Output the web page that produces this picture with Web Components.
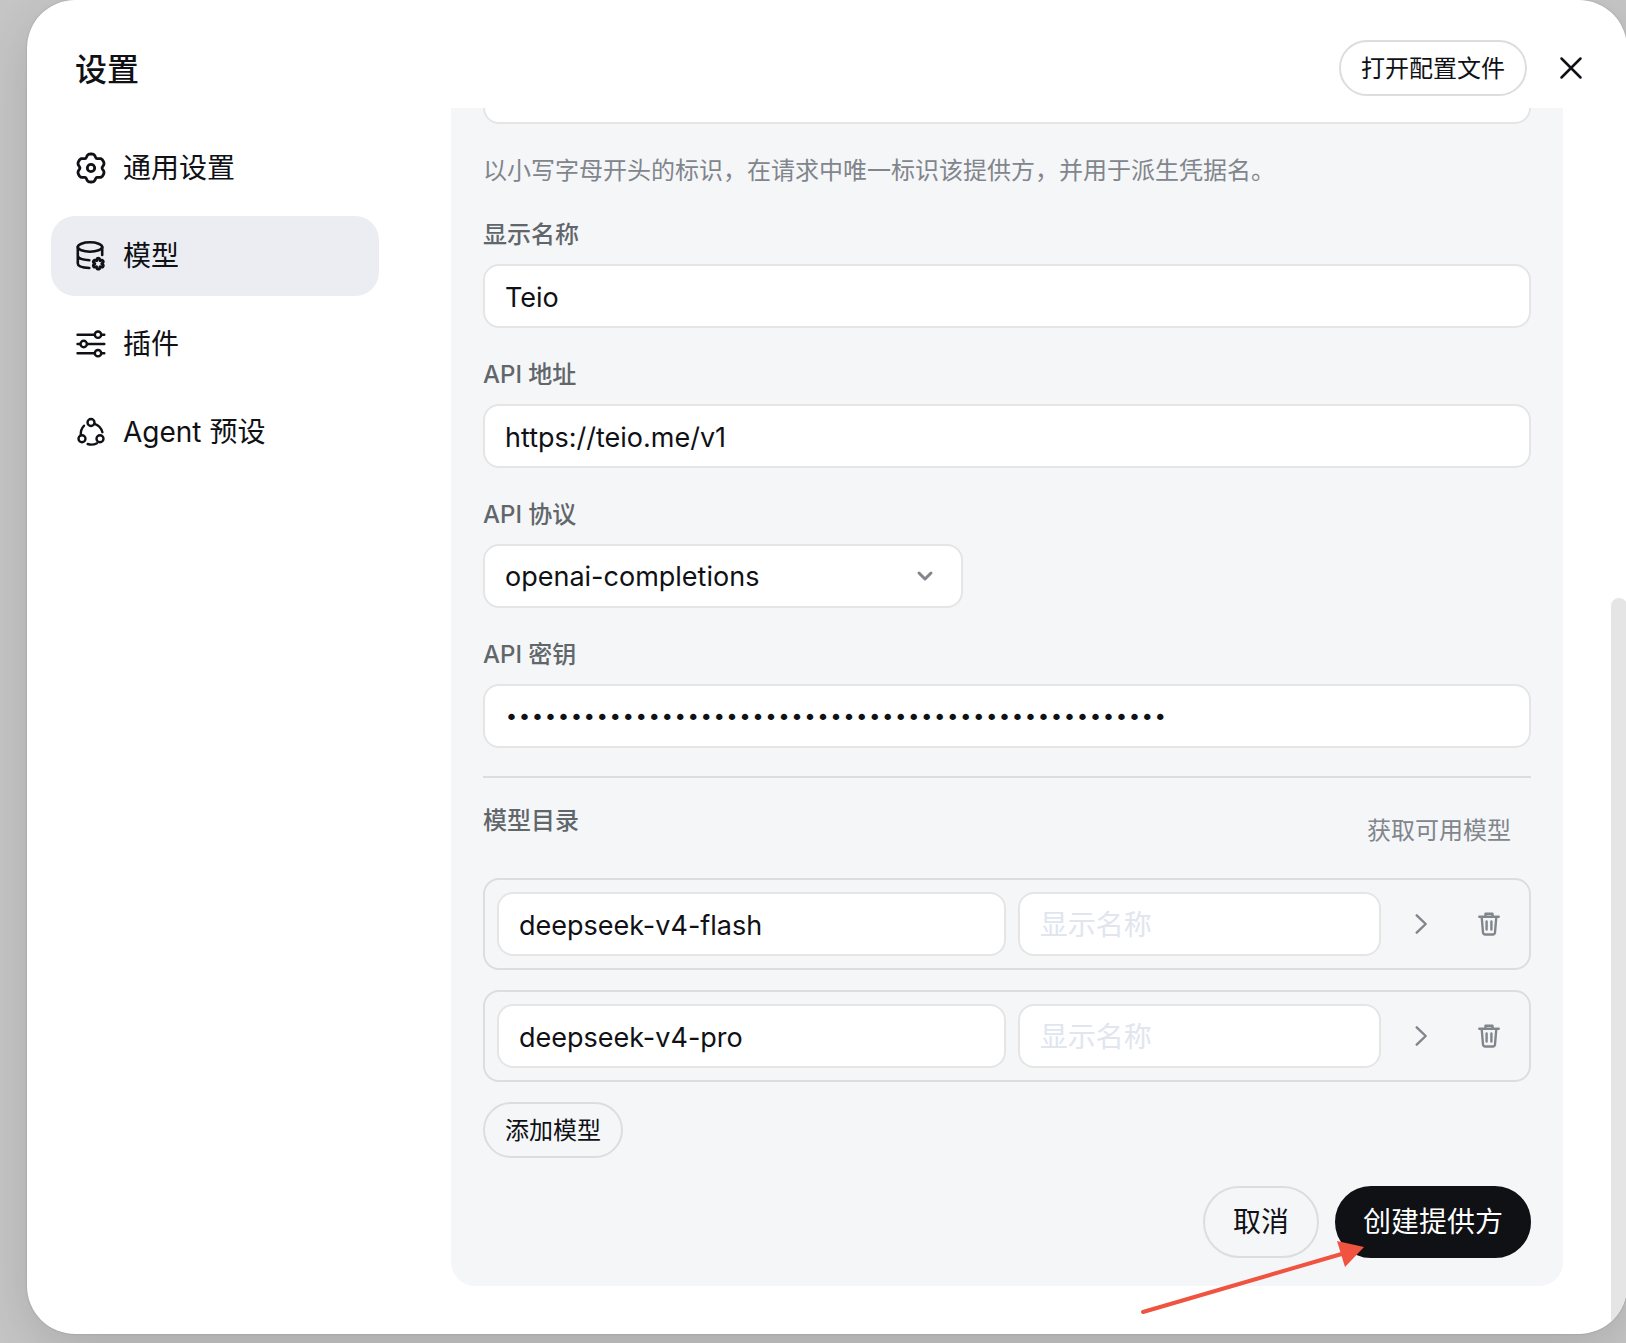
<!DOCTYPE html>
<html lang="zh-CN">
<head>
<meta charset="utf-8">
<title>设置</title>
<style>
  html, body {
    height: 100%;
    margin: 0;
  }

  body {
    overflow: hidden;
    background: #c6c6c6;
    color: #0f1115;
    font-family: Inter, "Noto Sans CJK SC", sans-serif;
    font-size: 28px;
    line-height: 40px;
  }
</style>
</head>
<body>

<settings-dialog heading="设置">
  <pill-button slot="action" size="small">打开配置文件</pill-button>

  <nav-item slot="nav" icon="gear">通用设置</nav-item>
  <nav-item slot="nav" icon="database" active>模型</nav-item>
  <nav-item slot="nav" icon="sliders">插件</nav-item>
  <nav-item slot="nav" icon="agents">Agent 预设</nav-item>

  <provider-form></provider-form>
</settings-dialog>

<template id="nav-item">
  <style>
    :host {
      display: block;
    }

    a {
      display: flex;
      align-items: center;
      gap: 16px;
      height: 80px;
      padding: 0 24px;
      border-radius: 24px;
      color: inherit;
      text-decoration: none;
    }

    :host([active]) a {
      background: #ecedf2;
    }
  </style>
  <a href="#"><ui-icon></ui-icon><span><slot></slot></span></a>
</template>

<template id="pill-button">
  <style>
    :host {
      display: block;
    }

    button {
      box-sizing: border-box;
      display: block;
      height: 72px;
      padding: 0 28px;
      border: 2px solid #dcdddf;
      border-radius: 36px;
      background: transparent;
      color: inherit;
      font: inherit;
      white-space: nowrap;
      cursor: pointer;
    }

    :host([size=small]) button {
      height: 56px;
      padding: 2px 20px 0;
      border-radius: 28px;
      font-size: 24px;
    }

    :host([kind=primary]) button {
      padding: 0 26px;
      border-color: #0f1115;
      background: #0f1115;
      color: #fff;
    }

    :host([kind=text]) button {
      border: none;
      color: #81858c;
    }
  </style>
  <button type="button"><slot></slot></button>
</template>

<template id="icon-button">
  <style>
    :host {
      display: block;
    }

    button {
      display: flex;
      align-items: center;
      justify-content: center;
      width: 56px;
      height: 56px;
      padding: 0;
      border: none;
      background: none;
      color: inherit;
      cursor: pointer;
    }
  </style>
  <button type="button"><ui-icon></ui-icon></button>
</template>

<template id="text-field">
  <style>
    :host {
      display: flex;
      flex-direction: column;
      gap: 12px;
      min-width: 0;
    }

    label {
      padding-top: 2px;
      color: #61666b;
      font-size: 24px;
      font-weight: 500;
      line-height: 34px;
    }

    .control {
      display: grid;
      align-items: center;
    }

    .control > * {
      grid-area: 1 / 1;
    }

    input, select {
      appearance: none;
      box-sizing: border-box;
      width: 100%;
      height: 64px;
      margin: 0;
      padding: 2px 20px 0;
      border: 2px solid #e5e5e5;
      border-radius: 16px;
      outline: none;
      background: #fff;
      color: #0f1115;
      font: inherit;
      font-size: 27px;
      line-height: 40px;
    }

    input::placeholder {
      color: #e1e5ee;
      font-size: 28px;
      opacity: 1;
    }

    input[type=password] {
      font-family: "DejaVu Sans", sans-serif;
      font-size: 22px;
    }

    ui-icon {
      justify-self: end;
      margin-right: 24px;
      color: #81858c;
      pointer-events: none;
    }
  </style>
  <label for="control"></label>
  <div class="control"></div>
</template>

<template id="model-row">
  <style>
    :host {
      display: flex;
      align-items: center;
      gap: 12px;
      padding: 12px;
      border: 2px solid #dcdddf;
      border-radius: 16px;
      color: #81858c;
    }

    .fields {
      display: grid;
      grid-template-columns: 7fr 5fr;
      gap: 12px;
      flex: 1;
    }
  </style>
  <div class="fields">
    <text-field class="model" name="模型 ID"></text-field>
    <text-field name="显示名称" placeholder="显示名称"></text-field>
  </div>
  <icon-button icon="right" name="展开"></icon-button>
  <icon-button icon="trash" name="删除"></icon-button>
</template>

<template id="provider-form">
  <style>
    :host {
      display: flex;
      flex-direction: column;
      gap: 28px;
      flex: none;
      padding: 32px 32px 28px;
      border-radius: 24px;
      background: #f5f6f8;
    }

    p, h2 {
      margin: 0;
      padding-top: 2px;
      font-size: 24px;
      line-height: 34px;
    }

    p {
      color: #81858c;
    }

    h2 {
      color: #61666b;
      font-weight: 500;
    }

    .short {
      width: 480px;
    }

    .models {
      display: flex;
      flex-direction: column;
      align-items: stretch;
      gap: 20px;
      padding-top: 24px;
      border-top: 2px solid #dcdddf;
    }

    .bar {
      display: flex;
      justify-content: space-between;
    }

    .models > pill-button {
      align-self: flex-start;
    }

    .actions {
      display: flex;
      justify-content: flex-end;
      gap: 16px;
    }
  </style>
  <text-field name="提供方标识"></text-field>
  <p>以小写字母开头的标识，在请求中唯一标识该提供方，并用于派生凭据名。</p>
  <text-field label="显示名称" value="Teio"></text-field>
  <text-field label="API 地址" value="https://teio.me/v1"></text-field>
  <text-field class="short" label="API 协议" type="select" value="openai-completions"></text-field>
  <text-field label="API 密钥" type="password" value="sk-0123456789abcdef0123456789abcdef0123456789abcdef"></text-field>
  <section class="models">
    <div class="bar">
      <h2>模型目录</h2>
      <pill-button size="small" kind="text">获取可用模型</pill-button>
    </div>
    <model-row model="deepseek-v4-flash"></model-row>
    <model-row model="deepseek-v4-pro"></model-row>
    <pill-button size="small">添加模型</pill-button>
  </section>
  <div class="actions">
    <pill-button>取消</pill-button>
    <pill-button kind="primary">创建提供方</pill-button>
  </div>
</template>

<template id="settings-dialog">
  <style>
    :host {
      display: block;
      box-sizing: border-box;
      height: 100%;
      padding: 0 0 9px 27px;
    }

    .dialog {
      position: relative;
      display: flex;
      flex-direction: column;
      height: 100%;
      margin-right: -1px;
      border-radius: 48px;
      background: #fff;
      box-shadow: 0 0 2px rgba(0,0,0,0.2), 0 16px 56px rgba(0,0,0,0.14);
    }

    header {
      display: flex;
      align-items: center;
      gap: 16px;
      padding: 40px 28px 12px 48px;
    }

    h1 {
      flex: 1;
      margin: 0;
      padding-top: 4px;
      font-size: 32px;
      font-weight: 500;
      line-height: 48px;
    }

    .body {
      display: flex;
      flex: 1;
      min-height: 0;
    }

    nav {
      display: flex;
      flex-direction: column;
      gap: 8px;
      box-sizing: border-box;
      width: 376px;
      padding: 20px 24px;
    }

    /* scrolled to its end: the form sits on the bottom edge */
    main {
      position: relative;
      display: flex;
      flex-direction: column;
      justify-content: flex-end;
      flex: 1;
      min-width: 0;
      padding: 0 64px 48px 48px;
      overflow: hidden;
      border-bottom-right-radius: 48px;
    }

    .thumb {
      position: absolute;
      right: 0;
      bottom: 0;
      width: 16px;
      height: 60%;
      border-radius: 8px 8px 0 0;
      background: #e5e5e5;
    }

    /* pointer drawn over the primary action */
    .arrow {
      position: absolute;
      right: 258px;
      bottom: 16px;
      width: 232px;
      height: 84px;
      pointer-events: none;
    }
  </style>
  <div class="dialog">
    <header>
      <h1></h1>
      <slot name="action"></slot>
      <icon-button icon="close" name="关闭"></icon-button>
    </header>
    <div class="body">
      <nav><slot name="nav"></slot></nav>
      <main>
        <slot></slot>
        <div class="thumb"></div>
      </main>
    </div>
    <svg class="arrow" viewBox="0 0 232 84" fill="#f0533f">
      <path d="M6 78 208 19" stroke="#f0533f" stroke-width="4" stroke-linecap="round"/>
      <path d="M200 7 227 13 208 33Z"/>
    </svg>
  </div>
</template>

<script>
(function() {
  // closed outline with six soft lobes
  function lobes(cx, cy, r, depth) {
    let d = '';
    for(let i = 0; i < 96; i++) {
      const a = i / 96 * Math.PI * 2;
      const k = r + depth * (Math.cos(6 * a) - 0.25 * Math.cos(12 * a));
      d += (i ? 'L' : 'M') + (cx + k * Math.sin(a)).toFixed(2) + ' ' + (cy - k * Math.cos(a)).toFixed(2);
    }
    return d + 'Z';
  }

  const ICONS = {
    gear: [32, 2.8, '<path d="' + lobes(16, 16, 12.9, 1.5) + '"/><circle cx="16" cy="16" r="3.7"/>'],
    database: [32, 2.6, '<ellipse cx="15" cy="7" rx="12.2" ry="4.7"/><path d="M27.2 7v8M2.8 7v16.5c0 2.4 4 4.2 11.5 4.500M2.8 15.5c0 2.5 4.5 4.300 11.500 4.700"/><path d="' + lobes(23.3, 23.7, 4.7, 1) + '" stroke-width="2.8"/>'],
    sliders: [32, 2.4, '<path d="M2.5 6.7h17M26.5 6.7h2.8M2.5 16h2.7M12.3 16h17M2.5 25.2h17M26.5 25.2h2.8"/><circle cx="23" cy="6.7" r="3.2"/><circle cx="8.7" cy="16" r="3.2"/><circle cx="23" cy="25.2" r="3.2"/>'],
    agents: [32, 2.4, '<circle cx="16" cy="6.5" r="3.5"/><circle cx="7" cy="22.8" r="3.5"/><circle cx="25" cy="22.8" r="3.5"/><path d="M9 9.7a12 12 0 0 0-3.2 9M19.6 7.8a12 12 0 0 1 7.8 8.4M12.7 28a12 12 0 0 0 9.3-.8"/>'],
    close: [28, 2.5, '<path d="M4.5 4.5 23.5 23.5M23.5 4.5 4.5 23.5"/>'],
    down: [28, 3, '<path d="M8 11 14 17 20 11"/>'],
    right: [28, 2.4, '<path d="M9.7 5.3 18.7 14 9.7 22.7"/>'],
    trash: [28, 2.4, '<path d="M4.3 6.8h19.4M10.5 6V3.8h7V6M6.7 7l1.3 15.5q.2 2 2.2 2h7.6q2 0 2.2-2L21.3 7M11.6 11.5v8M16.4 11.5v8"/>']
  };

  function attach(el, id) {
    const tpl = document.querySelector('#' + id);
    return el.attachShadow({mode: 'open'}).appendChild(tpl.content.cloneNode(true));
  }

  customElements.define('ui-icon', class extends HTMLElement {
    static get observedAttributes() {
      return ['name'];
    }

    constructor() {
      super();
      this.attachShadow({mode: 'open'});
    }

    attributeChangedCallback(attr, oldValue, newValue) {
      const [size, stroke, shape] = ICONS[newValue];
      this.shadowRoot.innerHTML = `
        <style>
          :host { display: block; flex: none; width: ${size}px; height: ${size}px; }
          svg { display: block; }
        </style>
        <svg width="${size}" height="${size}" viewBox="0 0 ${size} ${size}" fill="none" stroke="currentColor"
          stroke-width="${stroke}" stroke-linecap="round" stroke-linejoin="round" aria-hidden="true">${shape}</svg>`;
    }
  });

  customElements.define('nav-item', class extends HTMLElement {
    constructor() {
      super();
      attach(this, 'nav-item');
    }

    connectedCallback() {
      this.shadowRoot.querySelector('ui-icon').setAttribute('name', this.getAttribute('icon'));
    }
  });

  customElements.define('pill-button', class extends HTMLElement {
    constructor() {
      super();
      attach(this, 'pill-button');
    }
  });

  customElements.define('icon-button', class extends HTMLElement {
    constructor() {
      super();
      attach(this, 'icon-button');
    }

    connectedCallback() {
      this.shadowRoot.querySelector('ui-icon').setAttribute('name', this.getAttribute('icon'));
      this.shadowRoot.querySelector('button').setAttribute('aria-label', this.getAttribute('name'));
    }
  });

  customElements.define('text-field', class extends HTMLElement {
    constructor() {
      super();
      attach(this, 'text-field');
    }

    connectedCallback() {
      const box = this.shadowRoot.querySelector('.control');
      const label = this.shadowRoot.querySelector('label');
      const type = this.getAttribute('type') || 'text';
      const value = this.getAttribute('value') || '';
      const control = document.createElement(type === 'select' ? 'select' : 'input');

      control.id = 'control';
      if(type === 'select') {
        control.add(new Option(value));
        box.append(control);
        const icon = document.createElement('ui-icon');
        icon.setAttribute('name', 'down');
        box.append(icon);
      }
      else {
        control.type = type;
        control.value = value;
        control.placeholder = this.getAttribute('placeholder') || '';
        box.append(control);
      }

      if(this.hasAttribute('label'))
        label.textContent = this.getAttribute('label');
      else {
        label.remove();
        control.setAttribute('aria-label', this.getAttribute('name'));
      }
    }
  });

  customElements.define('model-row', class extends HTMLElement {
    constructor() {
      super();
      attach(this, 'model-row');
    }

    connectedCallback() {
      const field = this.shadowRoot.querySelector('.model');
      field.setAttribute('value', this.getAttribute('model'));
      field.shadowRoot.querySelector('input').value = this.getAttribute('model');
    }
  });

  customElements.define('provider-form', class extends HTMLElement {
    constructor() {
      super();
      attach(this, 'provider-form');
    }
  });

  customElements.define('settings-dialog', class extends HTMLElement {
    constructor() {
      super();
      attach(this, 'settings-dialog');
    }

    connectedCallback() {
      this.shadowRoot.querySelector('h1').textContent = this.getAttribute('heading');
    }
  });
})();
</script>
</body>
</html>
